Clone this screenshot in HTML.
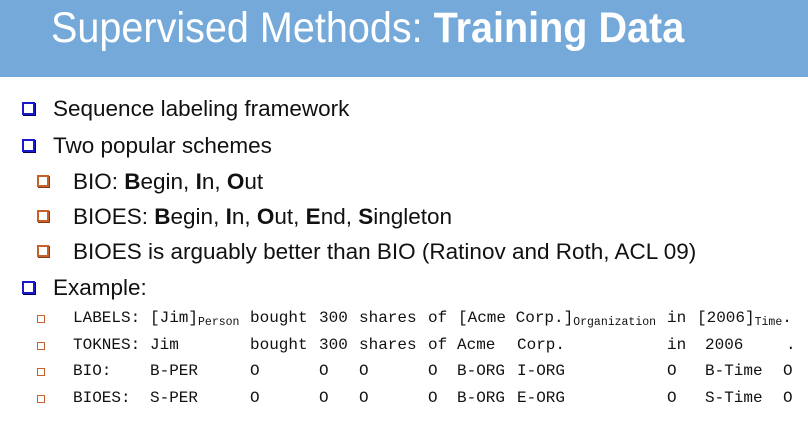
<!DOCTYPE html>
<html><head><meta charset="utf-8"><style>
body{margin:0;width:808px;height:423px;background:#fff;position:relative;overflow:hidden;font-family:"Liberation Sans",sans-serif;}
.hdr{position:absolute;left:0;top:0;width:808px;height:77px;background:#74a9da;}
.title{position:absolute;left:51px;top:4px;font-size:43px;color:#fff;white-space:nowrap;transform:scaleX(0.92);transform-origin:left top;}
.b{position:absolute;font-size:22.5px;color:#111;white-space:nowrap;}
.sq{position:absolute;width:9px;height:9px;border:2px solid #1a1acc;box-shadow:1px 1px 0 #000066;}
.sq2{position:absolute;width:8px;height:8px;border:2px solid #c8602a;box-shadow:1px 1px 0 #8a3a10;}
.m{position:absolute;font-family:"Liberation Mono",monospace;font-size:16px;color:#111;white-space:nowrap;}
sub{font-size:11.5px;vertical-align:-3px;}
.sq3{position:absolute;width:6px;height:6px;border:1.5px solid #c8602a;}
</style></head><body>
<div class="hdr"></div>
<div class="title">Supervised Methods: <b>Training Data</b></div>

<div class="sq" style="left:22px;top:102px"></div><div class="b" style="left:53px;top:96px">Sequence labeling framework</div>
<div class="sq" style="left:22px;top:139px"></div><div class="b" style="left:53px;top:133px">Two popular schemes</div>
<div class="sq2" style="left:37px;top:175px"></div><div class="b" style="left:73px;top:169px">BIO: <b>B</b>egin, <b>I</b>n, <b>O</b>ut</div>
<div class="sq2" style="left:37px;top:210px"></div><div class="b" style="left:73px;top:204px">BIOES: <b>B</b>egin, <b>I</b>n, <b>O</b>ut, <b>E</b>nd, <b>S</b>ingleton</div>
<div class="sq2" style="left:37px;top:245px"></div><div class="b" style="left:73px;top:239px">BIOES is arguably better than BIO (Ratinov and Roth, ACL 09)</div>
<div class="sq" style="left:22px;top:281px"></div><div class="b" style="left:53px;top:275px">Example:</div>

<div class="sq3" style="left:37px;top:315px"></div>
<div class="sq3" style="left:37px;top:342px"></div>
<div class="sq3" style="left:37px;top:368px"></div>
<div class="sq3" style="left:37px;top:395px"></div>

<div class="m" style="left:73px;top:309px">LABELS:</div>
<div class="m" style="left:150px;top:309px">[Jim]<sub>Person</sub></div>
<div class="m" style="left:250px;top:309px">bought</div>
<div class="m" style="left:319px;top:309px">300</div>
<div class="m" style="left:359px;top:309px">shares</div>
<div class="m" style="left:428px;top:309px">of</div>
<div class="m" style="left:458px;top:309px">[Acme Corp.]<sub>Organization</sub></div>
<div class="m" style="left:667px;top:309px">in</div>
<div class="m" style="left:697px;top:309px">[2006]<sub>Time</sub>.</div>

<div class="m" style="left:73px;top:336px">TOKNES:</div>
<div class="m" style="left:150px;top:336px">Jim</div>
<div class="m" style="left:250px;top:336px">bought</div>
<div class="m" style="left:319px;top:336px">300</div>
<div class="m" style="left:359px;top:336px">shares</div>
<div class="m" style="left:428px;top:336px">of</div>
<div class="m" style="left:457px;top:336px">Acme</div>
<div class="m" style="left:517px;top:336px">Corp.</div>
<div class="m" style="left:667px;top:336px">in</div>
<div class="m" style="left:705px;top:336px">2006</div>
<div class="m" style="left:786px;top:336px">.</div>

<div class="m" style="left:73px;top:362px">BIO:</div>
<div class="m" style="left:150px;top:362px">B-PER</div>
<div class="m" style="left:250px;top:362px">O</div>
<div class="m" style="left:319px;top:362px">O</div>
<div class="m" style="left:359px;top:362px">O</div>
<div class="m" style="left:428px;top:362px">O</div>
<div class="m" style="left:457px;top:362px">B-ORG</div>
<div class="m" style="left:517px;top:362px">I-ORG</div>
<div class="m" style="left:667px;top:362px">O</div>
<div class="m" style="left:705px;top:362px">B-Time</div>
<div class="m" style="left:783px;top:362px">O</div>

<div class="m" style="left:73px;top:389px">BIOES:</div>
<div class="m" style="left:150px;top:389px">S-PER</div>
<div class="m" style="left:250px;top:389px">O</div>
<div class="m" style="left:319px;top:389px">O</div>
<div class="m" style="left:359px;top:389px">O</div>
<div class="m" style="left:428px;top:389px">O</div>
<div class="m" style="left:457px;top:389px">B-ORG</div>
<div class="m" style="left:517px;top:389px">E-ORG</div>
<div class="m" style="left:667px;top:389px">O</div>
<div class="m" style="left:705px;top:389px">S-Time</div>
<div class="m" style="left:783px;top:389px">O</div>
</body></html>
